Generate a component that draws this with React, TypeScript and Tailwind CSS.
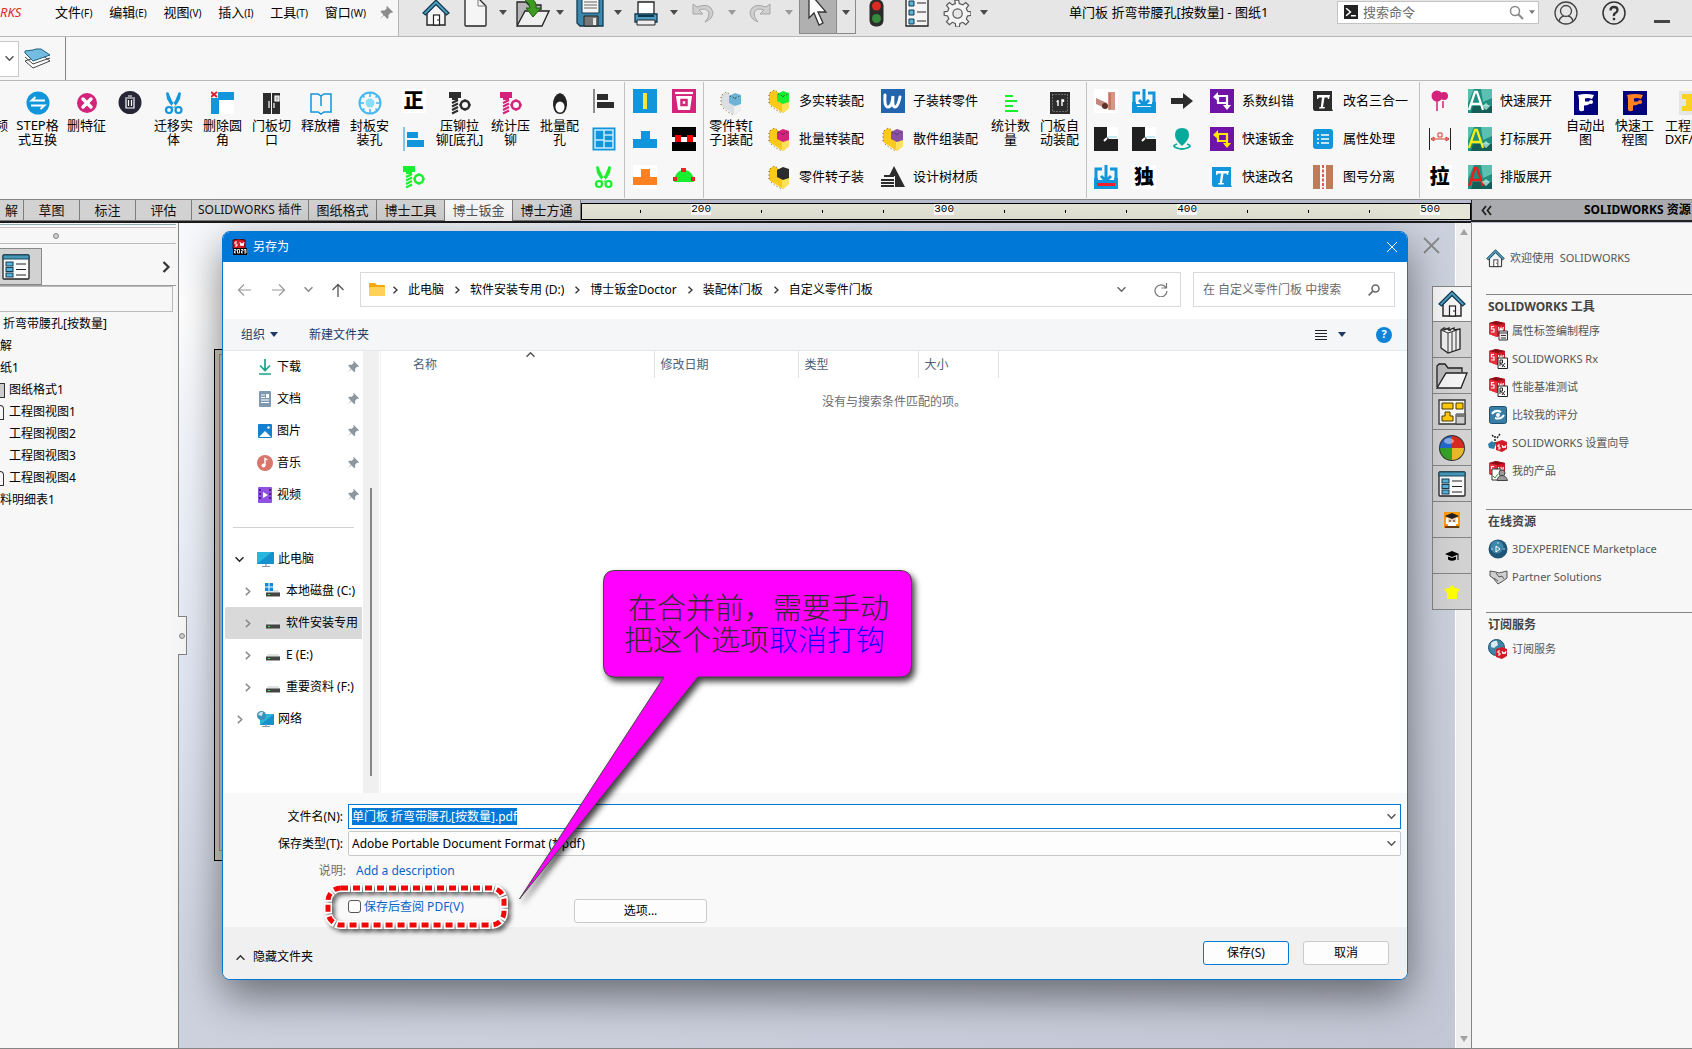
import React, { useEffect, useRef } from 'react';
import type { ReactNode } from 'react';

function Svg({ w = 24, h = w, vb = '0 0 24 24', children }: { w?: number; h?: number; vb?: string; children: ReactNode }) {
  return (
    <svg width={w} height={h} viewBox={vb} fill="none" className="shrink-0" aria-hidden="true">
      {children}
    </svg>
  );
}

/* ---------- shared icons ---------- */
const Caret = ({ color = '#4a4a4a' }: { color?: string }) => (
  <Svg w={8} h={5} vb="0 0 8 5"><path d="M0 0h8L4 5z" fill={color} /></Svg>
);
const Chevron = ({ d = 'right', color = '#555', size = 8 }: { d?: 'right' | 'down' | 'up'; color?: string; size?: number }) => (
  <Svg w={size} h={size} vb="0 0 8 8">
    <path d={d === 'right' ? 'M2.5 .8 6 4 2.5 7.2' : d === 'down' ? 'M.5 2 4 5.6 7.5 2' : 'M.5 6 4 2.4 7.5 6'} stroke={color} strokeWidth="1.3" />
  </Svg>
);
const House = ({ s = 28 }: { s?: number }) => (
  <Svg w={s} vb="0 0 28 28">
    <path d="M5 14v12h18V13L14 5z" fill="#f4f4f4" stroke="#222" strokeWidth="1.4" />
    <rect x="11.500" y="16" width="6" height="10" fill="#fff" stroke="#222" strokeWidth="1.2" />
    <path d="M16 20v2" stroke="#222" />
    <path d="m1 14 13-13 13 13-2.500 2L14 5.500 3.500 16z" fill="#4d9dc0" stroke="#12394f" strokeWidth="1.2" />
  </Svg>
);
const ListIcon = ({ s = 28 }: { s?: number }) => (
  <Svg w={s} vb="0 0 28 28">
    <rect x="1" y="2" width="26" height="24" rx="1" fill="#fafafa" stroke="#222" strokeWidth="1.3" />
    <path d="M1 2h26v4H1z" fill="#4796b5" stroke="#174a60" />
    {[9, 14.5, 20].map((y) => (
      <g key={y}>
        <rect x="4" y={y} width="7" height="4" fill="#58b1d6" stroke="#143d52" />
        <path d={`M14 ${y + 2}h10`} stroke="#222" />
      </g>
    ))}
  </Svg>
);
const Bolt = ({ c }: { c: string }) => (
  <Svg>
    <path d="M1 1h12v6h-3v2H4V7H1z" fill={c} />
    <path d="m4 12 6-3M4 15.500l6-3M4 19l6-3M4 22.500l6-3" stroke={c} strokeWidth="2" />
    <path d="m17 8 4 2 2 4-2 4-4 2-4-2-2-4 2-4z" fill={c} />
    <circle cx="17" cy="14" r="3" fill="#f7f7f7" />
  </Svg>
);
const Scissors = ({ c }: { c: string }) => (
  <Svg>
    <path d="M4 2c1-1 3-1 3 1l3 7 4 5-2 2L8 13 5 8zM19 2c-1-1-3-1-3 1l-3 7-4 5 2 2 4-4 3-5z" fill={c} />
    <circle cx="7" cy="19" r="3" stroke={c} strokeWidth="2.200" />
    <circle cx="16.500" cy="19" r="3" stroke={c} strokeWidth="2.200" />
  </Svg>
);
const Brick = ({ c, body = '#fbc91c', side = '#fbe15c' }: { c: string; body?: string; side?: string }) => (
  <Svg>
    <path d="m2 4 5-3 5 3v7l4 2 6-2v8l-6 5L2 15z" fill={body} />
    <path d="m15 13 7-4v10l-7 5z" fill={side} />
    <path d="M3 4 7 1l4 2M2 6v9m2 2 5 4 6 3" stroke="#6b5a10" strokeDasharray="1 2.500" />
    <path d="m10 5 6-3 6 2v9l-6 2-6-3z" fill={c} />
    <path d="m11 5 5 2 5-2M16 7v2" stroke="#1e3f2a" strokeDasharray="1 2" />
  </Svg>
);
const TextTile = ({ bg, c = '#fff' }: { bg: string; c?: string }) => (
  <Svg>
    <path d="M2 2h19v18l1 2H4q-2 0-2-3z" fill={bg} />
    <path d="M6 6h13l-1 4h-1l-.500-1.500h-3L12 18h2l-.500 1.500H8L8.500 18h1.300L11 8.500H8L7 10H6z" fill={c} />
  </Svg>
);
const Glyph = ({ t }: { t: string }) => (
  <span className="flex h-6 w-6 items-center justify-center bg-white text-[20px] leading-6 font-black text-black">{t}</span>
);
const CadTile = ({ c }: { c: string }) => (
  <Svg>
    <path d="M0 0h24v24H0z" fill="#1f9080" />
    <path d="M13 0h11v9L15 13zM0 0h6L0 14z" fill="#5cc0b0" />
    <path d="M3 24h21v-7H5z" fill="#135f58" />
    <path d="M1 21 7 3h2l6 18M3 15h9" stroke={c} strokeWidth="2.300" />
    <path d="M14 17h8m-4-3v7m-2-5h4v3h-4z" stroke="#b7f2e4" />
  </Svg>
);
const Corner = () => (
  <Svg><path d="M0 0h24v24H0z" fill="#fff" /><path d="M0 0h13v10l2 2h9v12H0z" fill="#1f1f1f" /><path d="M14 10h9" stroke="#8fd3e8" /><path d="m10 14 3-3" stroke="#fff" strokeWidth="2" /></Svg>
);
const Download = ({ red = false }: { red?: boolean }) => (
  <Svg>
    <path d="M0 13h24v11H0z" fill="#1296db" />
    <path d="M8 4H2v14h20V4h-6" stroke="#1296db" strokeWidth="3" />
    <path d="M4 8h5v7H4zm11 0h5v7h-5z" fill="#f7f7f7" />
    <path d="M12 0v15m-5-4 5 5 5-5" stroke="#1296db" strokeWidth="3" />
    <path d={red ? 'M3 18h18v3H3z' : 'M5 17h14v1H5z'} fill={red ? '#f0202d' : '#e9f7ff'} />
  </Svg>
);
const PurpleTile = ({ c }: { c: string }) => (
  <Svg>
    <path d="M0 0h24v24H0z" fill="#7114a6" />
    <path d="M7 7h10v9M17 14H8V8" stroke={c} strokeWidth="2.200" />
    <path d="m3 8 5-5v9zm18 8-4 5-4-5z" fill={c} />
  </Svg>
);
const FTile = ({ c }: { c: string }) => (
  <Svg>
    <path d="M0 0h24v24H0z" fill="#02027c" />
    <path d="M4 4q8-2 16 0l-2 4q-4-1.500-7-.500v3h6q-1 4-7 4v5q-5 2-5-2V9Q5 6 4 4z" fill={c} />
    <circle cx="17" cy="11" r="2" fill={c} />
  </Svg>
);
const Cube = ({ tag }: { tag?: string }) => (
  <Svg w={20} vb="0 0 20 20">
    <path d="m1 2 7-2 9 2v11l-8 3-8-3z" fill="#cf1724" />
    <path d="m1 2 8 2v12l-8-3z" fill="#e62f3b" />
    <path d="m1 2 7-2 9 2-8 2z" fill="#8c0f18" />
    <path d="M6 5.500H3.500V8H6v3H3M10.500 6l1 5 1.500-4 1 4 1.500-5" stroke="#fff" strokeWidth="1.200" />
    {tag === 'rx' && (<g><path d="M10 9h9.500v10.500H10z" fill="#fff" stroke="#222" /><path d="M12 17v-6h2.500v3H12l5 4m0-4-3 4" stroke="#222" /></g>)}
    {tag === 'doc' && (<g><path d="M11 10h8.500v9H11z" fill="#eee" stroke="#333" /><path d="M11 12h8M13 14.500h5M13 17h5" stroke="#333" /></g>)}
    {tag === 'user' && (<g><path d="M4 8h9v11H4z" fill="#fff" stroke="#333" /><circle cx="14" cy="12" r="3" fill="#999" stroke="#444" /><path d="M9 19.500q1-5 5-5t5.500 5z" fill="#999" stroke="#444" /><path d="m5 15 2 2 3-4" stroke="#2a9d2a" /></g>)}
  </Svg>
);

/* ---------- title bar ---------- */
const menus = [['文件', 'F'], ['编辑', 'E'], ['视图', 'V'], ['插入', 'I'], ['工具', 'T'], ['窗口', 'W']];

function TitleBar() {
  const btn = 'flex shrink-0 items-center justify-center h-9';
  return (
    <header className="flex h-[37px] shrink-0 border-b border-[#b9b9b9] bg-[#e6e6e6]">
      <div className="flex w-[399px] shrink-0 items-center border-r border-[#b5b5b5] bg-[#f7f7f7] pb-[10px]">
        <span className="flex w-[55px] shrink-0 text-[13px] text-[#dc2b26] italic">RKS</span>
        <nav className="flex shrink-0 grow justify-between">
          {menus.map(([t, k]) => (
            <button key={k} className="flex items-baseline text-[13px] whitespace-nowrap text-black">{t}<span className="text-[10px]">({k})</span></button>
          ))}
        </nav>
        <button aria-label="固定" className="flex w-8 justify-end pr-[5px] pl-4">
          <Svg w={14} vb="0 0 14 14"><path d="m8 0 6 6-1 1-1-.500-2.500 2.500v3l-1 1L5 9.500 1 13 4.500 9 1.500 5.500l1-1h3L8 2 7.200 1z" fill="#8c8c8c" /></Svg>
        </button>
      </div>
      <div className="flex min-w-0 grow items-start pl-[15px]">
        <button aria-label="主页" className={`${btn} w-[44px] pb-[11px]`}><House /></button>
        <button aria-label="新建" className={`${btn} w-[34px] pb-[11px]`}>
          <Svg w={23} h={28} vb="0 0 23 28"><path d="M1 0v26q0 1 1 1h19q1 0 1-1V7l-7-7z" fill="#f5f5f5" stroke="#222" strokeWidth="1.300" /><path d="M14 0v7h8" stroke="#777" /></Svg>
        </button>
        <button aria-label="新建选项" className={`${btn} w-[22px] pb-3`}><Caret /></button>
        <button aria-label="打开" className={`${btn} w-[38px] pb-[11px]`}>
          <Svg w={34} h={28} vb="0 0 34 28"><path d="M1 26V3h9l3 3h12v5" fill="#b5b5b5" stroke="#222" strokeWidth="1.300" /><path d="m1 27 8-15h24l-7 15z" fill="#efefef" stroke="#222" strokeWidth="1.300" /><path d="M8 0h8q5 3 4 9h5l-8 9-7-9h4q0-5-6-9z" fill="#3f9a20" stroke="#1e5b10" /></Svg>
        </button>
        <button aria-label="打开选项" className={`${btn} w-[15px] pb-3`}><Caret /></button>
        <button aria-label="保存" className={`${btn} w-[45px] pb-[11px]`}>
          <Svg w={28} vb="0 0 28 28"><path d="M1 0h26v27H4l-3-3z" fill="#3c87ad" stroke="#123b50" strokeWidth="1.300" /><path d="M6 0h17v14H6z" fill="#f4f4f4" stroke="#123b50" /><path d="M8 3h13M8 6h13M8 9h13" stroke="#666" /><path d="M8 17h14v10H8z" fill="#777" stroke="#222" /><path d="M17 19h3v7h-3z" fill="#e6e6e6" /></Svg>
        </button>
        <button aria-label="保存选项" className={`${btn} w-[12px] pb-3`}><Caret /></button>
        <button aria-label="打印" className={`${btn} w-[43px] pb-[11px]`}>
          <Svg w={24} h={26} vb="0 0 24 26"><path d="M4 2h16v13H4z" fill="#fff" stroke="#222" strokeWidth="1.300" /><path d="M1 14h22v8H1z" fill="#4e9dc1" stroke="#0e3850" strokeWidth="1.300" /><path d="M3 20h18v5H3z" fill="#eee" stroke="#222" /><path d="M4 16h16" stroke="#0e3850" strokeWidth="2" /></Svg>
        </button>
        <button aria-label="打印选项" className={`${btn} w-[14px] pb-3`}><Caret /></button>
        <button aria-label="撤销" className={`${btn} w-[44px] pb-[10px]`}>
          <Svg w={22} vb="0 0 22 22"><path d="M1 2v10h10L7 8q8-3 10 3 0 5-4 9 8-3 8-10Q18 0 5 5z" fill="#cfcfcf" stroke="#a6a6a6" /></Svg>
        </button>
        <button aria-label="撤销选项" className={`${btn} w-[13px] pb-3`}><Caret color="#9a9a9a" /></button>
        <button aria-label="重做" className={`${btn} w-[44px] pb-[10px]`}>
          <Svg w={22} vb="0 0 22 22"><path d="M21 2v10H11l4-4q-8-3-10 3 0 5 4 9-8-3-8-10Q4 0 17 5z" fill="#cfcfcf" stroke="#a6a6a6" /></Svg>
        </button>
        <button aria-label="重做选项" className={`${btn} w-[13px] pb-3`}><Caret color="#9a9a9a" /></button>
        <div className="ml-[4px] flex h-[34px] border border-t-0 border-[#8a8a8a]">
          <button aria-label="选择" className="flex w-[36px] items-center justify-center bg-[#b0b0b0] pb-[9px]">
            <Svg w={20} h={28} vb="0 0 20 28"><path d="M1 0v20l5-5 5 12 4-2-5-11h8L6 0z" fill="#fff" stroke="#333" strokeWidth="1.300" /></Svg>
          </button>
          <button aria-label="选择选项" className="flex w-[19px] items-center justify-center border-l border-[#8a8a8a] pb-[9px]"><Caret /></button>
        </div>
        <button aria-label="重建" className={`${btn} w-[40px] pb-[11px]`}>
          <Svg w={15} h={28} vb="0 0 15 28"><rect width="14" height="27" x=".500" y=".500" rx="6" fill="#2b2b2b" /><circle cx="7.500" cy="7" r="4.500" fill="#d92b22" /><circle cx="7.500" cy="19.500" r="4.500" fill="#358a3c" /></Svg>
        </button>
        <button aria-label="文件属性" className={`${btn} w-[42px] pb-[11px]`}>
          <Svg w={24} h={28} vb="0 0 24 28"><path d="M1 0h22v27H1z" fill="#f4f4f4" stroke="#222" strokeWidth="1.300" />{[2, 11, 20].map((y) => <g key={y}><path d={`M4 ${y}h5v5H4z`} fill="#5cb3d6" stroke="#123b50" /><path d={`M12 ${y + 2}h9`} stroke="#222" /></g>)}</Svg>
        </button>
        <button aria-label="选项" className={`${btn} w-[37px] pb-[10px]`}>
          <Svg w={28} vb="0 0 24 24"><path d="m10 1 .600 3-2.600 1-2.500-2L3 5.500l2 2.500-1 2.500L1 11v3l3 .500 1 2.500-2 2.500L5.500 22 8 20l2.500 1 .500 3h3l.500-3L17 20l2.500 2 2.500-2.500-2-2.500 1-2.500 3-.500v-3l-3-.500L20 8l2-2.500L19.500 3 17 5l-3-1-.600-3z" fill="#f4f4f4" stroke="#555" /><circle cx="12.500" cy="12.500" r="4" fill="#e6e6e6" stroke="#555" /></Svg>
        </button>
        <button aria-label="更多选项" className={`${btn} w-[18px] pb-3`}><Caret /></button>
        <h1 className="ml-[76px] pt-[2px] text-[13px] leading-5 whitespace-nowrap text-black">单门板 折弯带腰孔[按数量] - 图纸1</h1>
        <div className="mt-[1px] mr-[15px] ml-auto flex h-[23px] w-[202px] shrink-0 items-center border border-[#c3c3c3] bg-white pr-[3px] pb-px pl-[6px]">
          <Svg w={14} vb="0 0 13 13"><path d="M0 0h13v13H0z" fill="#222" /><path d="m2 3 4 3.500L2 10M6.500 10H11" stroke="#fff" strokeWidth="1.400" /></Svg>
          <input aria-label="搜索命令" placeholder="搜索命令" className="ml-[5px] w-[116px] grow bg-transparent text-[13px] leading-5 outline-none placeholder:text-[#6e6e6e]" />
          <Svg w={15} vb="0 0 15 15"><circle cx="6" cy="6" r="4.500" stroke="#888" strokeWidth="1.500" /><path d="m9 9 5 5" stroke="#888" strokeWidth="2" /></Svg>
          <span className="ml-[5px]"><Svg w={6} h={4} vb="0 0 8 5"><path d="M0 0h8L4 5z" fill="#777" /></Svg></span>
        </div>
        <button aria-label="登录" className="pt-[1px] pr-6"><Svg w={24}><circle cx="12" cy="12" r="11" stroke="#444" strokeWidth="1.300" /><circle cx="12" cy="10" r="5.500" stroke="#444" strokeWidth="1.300" /><path d="M5 20q1-4 5-5m9 5q-1-4-5-5" stroke="#444" strokeWidth="1.300" /></Svg></button>
        <button aria-label="帮助" className="pt-[1px] pr-7"><Svg w={24}><circle cx="12" cy="12" r="11" stroke="#333" strokeWidth="1.500" /><path d="M8.500 9.500q0-3.500 3.500-3.500t3.500 3q0 2-2 3T12 15" stroke="#333" strokeWidth="2.300" /><path d="M10.800 16.800h2.400v2.400h-2.400z" fill="#333" /></Svg></button>
        <button aria-label="最小化" className="pt-5 pr-[22px]"><span className="block h-[3px] w-4 bg-[#444]" /></button>
      </div>
    </header>
  );
}

/* ---------- ribbon ---------- */
function Tall({ icon, lines, className = 'w-[49px]' }: { icon: ReactNode; lines: string[]; className?: string }) {
  return (
    <button className={`flex shrink-0 flex-col items-center pt-[10px] ${className}`} aria-label={lines.join('') || '删除'}>
      {icon}
      <span className="pt-[3px] text-[13px] leading-[14px] whitespace-pre-line">{lines.join('\n')}</span>
    </button>
  );
}
function IconCol({ icons, className = 'w-[38px]' }: { icons: [string, ReactNode][]; className?: string }) {
  return (
    <div className={`flex shrink-0 flex-col ${className}`}>
      {icons.map(([n, i]) => <button key={n} aria-label={n} className="flex h-[38px] items-center justify-center pt-[2px]">{i}</button>)}
    </div>
  );
}
function RowCol({ rows, className }: { rows: [ReactNode, string][]; className: string }) {
  return (
    <div className={`flex shrink-0 flex-col ${className}`}>
      {rows.map(([i, t]) => (
        <button key={t} className="flex h-[38px] items-center pt-[2px] text-[13px] whitespace-nowrap">
          <span className="flex w-[41px] shrink-0 justify-center">{i}</span>{t}
        </button>
      ))}
    </div>
  );
}
const Divider = ({ className = '' }: { className?: string }) => <div className={`my-[1px] w-px shrink-0 bg-[#c2c2c2] ${className}`} />;

function Ribbon() {
  return (
    <section className="flex h-[118px] shrink-0 overflow-hidden bg-[#f7f7f7] text-black">
      <div className="flex w-[13px] shrink-0 justify-end overflow-hidden pt-[37px] pr-[5px] text-[13px] leading-[14px]">频</div>
      <Tall lines={['STEP格', '式互换']} icon={<Svg><circle cx="12" cy="12" r="11.500" fill="#1296db" /><path d="M19 9.500H5.500L9.500 6M5 14.500h13.500l-4 3.500" stroke="#fff" strokeWidth="1.800" /></Svg>} />
      <Tall lines={['删特征']} icon={<Svg><circle cx="12" cy="12" r="10" fill="#d4237a" /><path d="m8 8 8 8m0-8-8 8" stroke="#fff" strokeWidth="3.500" strokeLinecap="round" /></Svg>} />
      <Tall className="w-[38px]" lines={[]} icon={<Svg><circle cx="12" cy="11.500" r="11.500" fill="#272636" /><path d="M7 7h10M10 5h4M8 8v9h8V8M10.500 9v6m3-6v6" stroke="#fff" strokeWidth="1.200" /></Svg>} />
      <Tall lines={['迁移实', '体']} icon={<Scissors c="#1296db" />} />
      <Tall lines={['删除圆', '角']} icon={<Svg><path d="M0 1h23v22H0z" fill="#fff" /><path d="M0 1h23v8H8v14H0z" fill="#1296db" /><path d="M0 0h7v7H0z" fill="#f7f7f7" /><path d="m0 1 6 5m0-5L0 6" stroke="#e0182d" strokeWidth="1.800" /></Svg>} />
      <Tall lines={['门板切', '口']} icon={<Svg><path d="M3 2h8v21H3zm9 0h8v21h-8z" fill="#2c2c2c" /><path d="M15 5h4v5h-4zM9 10v7M14 12v5" stroke="#fff" strokeWidth="1.200" fill="#bbb" /></Svg>} />
      <Tall lines={['释放槽']} icon={<Svg><path d="M2 3h7l3 2 3-2h7v18h-7l-3 2-3-2H2zM12 5v10" stroke="#1296db" strokeWidth="1.500" /></Svg>} />
      <Tall lines={['封板安', '装孔']} icon={<Svg><circle cx="12" cy="12" r="10.500" stroke="#46b8f3" strokeWidth="2" /><circle cx="12" cy="12" r="4.500" fill="#8adcfb" /><path d="M12 1v5m0 12v5M1 12h5m12 0h5M4.500 4.500l2 2m11 11 2 2m0-15-2 2m-11 11-2 2" stroke="#46b8f3" strokeWidth="1.600" /></Svg>} />
      <IconCol className="w-[39px]" icons={[
        ['正', <Glyph t="正" />],
        ['左对齐', <Svg><path d="M2 0v24" stroke="#1296db" /><path d="M5 5h11v6H5zm0 8h17v7H5z" fill="#1296db" /></Svg>],
        ['螺栓', <Bolt c="#18f02f" />],
      ]} />
      <Tall className="w-[53px]" lines={['压铆拉', '铆[底孔]']} icon={<Bolt c="#2c2c2c" />} />
      <Tall lines={['统计压', '铆']} icon={<Bolt c="#d4237a" />} />
      <Tall lines={['批量配', '孔']} icon={<Svg><path d="M12 2q7 2 7 12-1 9-7 9t-7-9Q5 4 12 2z" fill="#222" /><ellipse cx="12" cy="16" rx="4.500" ry="5.500" fill="#fff" /></Svg>} />
      <IconCol className="w-10" icons={[
        ['对齐', <Svg><path d="M2 0v24" stroke="#222" /><path d="M5 5h11v6H5zm0 8h17v6H5z" fill="#2c2c2c" /></Svg>],
        ['布局', <Svg><path d="M.500.500h23v23H.500z" fill="#1296db" /><path d="M3 3h18v18H3zM3 13h9M12 3v18M12 8h9M12 14h9" stroke="#c9eaff" strokeWidth="1.500" /></Svg>],
        ['剪切', <Scissors c="#18f02f" />],
      ]} />
      <Divider />
      <IconCol className="w-[39px]" icons={[
        ['单列', <Svg><path d="M0 0h24v24H0z" fill="#1296db" /><path d="M10 4h4v16h-4z" fill="#f7e53a" /></Svg>],
        ['蓝色凸台', <Svg><path d="M8 4h9v8h7v9H0v-9h8z" fill="#1296db" /></Svg>],
        ['橙色凸台', <Svg><path d="M0 0h24v24H0z" fill="#fff" /><path d="M8 4h9v8h7v8H0v-8h8z" fill="#ff8121" /></Svg>],
      ]} />
      <IconCol className="w-[39px]" icons={[
        ['槽口', <Svg><path d="M0 0h24v24H0z" fill="#d4237a" /><path d="M3 4h18" stroke="#fff" strokeWidth="2.200" /><path d="M4 7h16l-2 14H6z" fill="#fff" /><path d="M9.500 11h5v5h-5z" stroke="#d4237a" strokeWidth="2.500" /></Svg>],
        ['面罩', <Svg><path d="M0 0h24v24H0z" fill="#000" /><path d="M0 10h24v5H0z" fill="#fff" /><path d="M3 8h6v7H3zm12 0h6v7h-6z" fill="#f00" /></Svg>],
        ['圆顶', <Svg><path d="M2 17q1-12 10-12t10 12z" fill="#18f02f" /><path d="M9 3h5v4H9zM1 12h4v4H1zm18 0h4v4h-4z" fill="#ec2323" /></Svg>],
      ]} />
      <Divider />
      <Tall className="w-[54px]" lines={['零件转[', '子]装配']} icon={<Brick c="#6cb3d6" body="#dcdfe2" side="#f0f0f0" />} />
      <RowCol className="w-[114px]" rows={[[<Brick c="#18f02f" />, '多实转装配'], [<Brick c="#d4237a" />, '批量转装配'], [<Brick c="#2c2c2c" />, '零件转子装']]} />
      <RowCol className="w-[114px]" rows={[
        [<Svg><path d="M0 0h24v24H0z" fill="#2264ad" /><path d="M4 6q-1 12 3 12t5-11q-1 11 2 11t5-10" stroke="#fff" strokeWidth="3" strokeLinecap="round" /></Svg>, '子装转零件'],
        [<Brick c="#8a4fa3" />, '散件组装配'],
        [<Svg><path d="m13 1 11 21H14V11H8z" fill="#2c2c2c" /><path d="M3 11h10M0 15h13M0 18h13M0 21h13" stroke="#2c2c2c" strokeWidth="2" /></Svg>, '设计树材质'],
      ]} />
      <Tall lines={['统计数', '量']} icon={<Svg><path d="M6 5h8M6 10h12M6 15h8M6 20h13" stroke="#18f02f" strokeWidth="2" /></Svg>} />
      <Tall lines={['门板自', '动装配']} icon={<Svg><path d="M2 1h20v22H2z" fill="#2c2c2c" /><path d="M4.500 3.500h15v17h-15z" stroke="#aaa" strokeDasharray="1 2" /><path d="M10 9v6M8.500 10.500H10M14 15V9h1.500v2" stroke="#fff" strokeWidth="1.400" /></Svg>} />
      <Divider className="ml-[2px]" />
      <IconCol icons={[
        ['铜管', <Svg><path d="M0 0h24v24H0z" fill="#fff" /><path d="M14 3h7v18h-7z" fill="#d99684" /><path d="M16 4v16" stroke="#a85f50" /><path d="m2 9 11 5v6L2 15z" fill="#c0897c" /><circle cx="11" cy="17" r="3" fill="#5c3129" /></Svg>],
        ['切角一', <Corner />],
        ['导入', <Download red />],
      ]} />
      <IconCol icons={[['导出', <Download />], ['切角二', <Corner />], ['独', <Glyph t="独" />]]} />
      <IconCol icons={[
        ['箭头', <Svg><path d="M1 9h12V4l10 8-10 8v-5H1z" fill="#2c2c2c" /></Svg>],
        ['定位', <Svg><path d="M12 1q7 0 7 7 0 5-7 11Q5 13 5 8q0-7 7-7z" fill="#06a99a" /><path d="M7 17q-6 2 0 4 5 2 10 0 6-2 0-4" stroke="#06a99a" strokeWidth="1.800" /></Svg>],
      ]} />
      <RowCol className="w-[101px]" rows={[[<PurpleTile c="#fff" />, '系数纠错'], [<PurpleTile c="#ffe800" />, '快速钣金'], [<TextTile bg="#1296db" />, '快速改名']]} />
      <RowCol className="w-[117px]" rows={[
        [<TextTile bg="#2c2c2c" />, '改名三合一'],
        [<Svg><rect x="2" y="2" width="20" height="20" rx="3" fill="#1296db" /><path d="M6 8h2m2 0h8M6 12h2m2 0h8M6 16h2m2 0h8" stroke="#fff" strokeWidth="1.500" /></Svg>, '属性处理'],
        [<Svg><path d="M2 0h7v24H2zm13 0h7v24h-7z" fill="#bd7d58" /><path d="M12 0v24" stroke="#e02020" strokeWidth="1.500" strokeDasharray="3 1.500" /></Svg>, '图号分离'],
      ]} />
      <Divider />
      <IconCol className="w-[39px]" icons={[
        ['气球', <Svg><circle cx="9" cy="7" r="5.500" fill="#d4237a" /><circle cx="16" cy="7" r="4" fill="#d4237a" /><path d="M9 12v10M15 12v7" stroke="#d4237a" strokeWidth="1.500" /></Svg>],
        ['尺寸', <Svg><path d="M1.500 1v22M22.500 1v22" stroke="#222" /><path d="M3 12h18M3 12l3-2v4zm18 0-3-2v4zM10 6h4v4h-4z" stroke="#d63a2a" /></Svg>],
        ['拉', <Glyph t="拉" />],
      ]} />
      <RowCol className="w-[102px]" rows={[[<CadTile c="#fff" />, '快速展开'], [<CadTile c="#f7ef12" />, '打标展开'], [<CadTile c="#f01b1b" />, '排版展开']]} />
      <Tall lines={['自动出', '图']} icon={<FTile c="#fff" />} />
      <Tall lines={['快速工', '程图']} icon={<FTile c="#ff8121" />} />
      <Tall className="w-[64px]" lines={['工程图转', 'DXF/PDF']} icon={<Svg><path d="M0 0h24v24H0z" fill="#e5e5e5" /><path d="M3 3h18v5h-6v7h6v5H3v-5h4V8H3z" fill="#fbd21e" /></Svg>} />
    </section>
  );
}

/* ---------- tab strip and ruler ---------- */
const tabs: [string, string][] = [['解', 'w-6'], ['草图', 'w-14'], ['标注', 'w-14'], ['评估', 'w-14'], ['SOLIDWORKS 插件', 'w-[117px]'], ['图纸格式', 'w-[68px]'], ['博士工具', 'w-[68px]'], ['博士钣金', 'w-[68px]'], ['博士方通', 'w-[68px]']];

function TabStrip() {
  return (
    <div className="flex h-[24px] shrink-0 border-t border-[#858585] bg-[#b9bbce]">
      <div className="flex min-w-0 grow border-b-2 border-[#1a1a1a]">
        <div role="tablist" className="flex h-[21px] shrink-0">
          {tabs.map(([t, w], i) => (
            <button key={t} role="tab" aria-selected={i === 7} className={`flex items-center justify-center border-r border-[#7d7d7d] pb-px leading-[18px] whitespace-nowrap ${w} ${i === 4 ? 'text-[12px]' : 'text-[13px]'} ${i === 7 ? 'bg-[#f7f7f7] text-[#555]' : 'border-b bg-[#d2d2d2] text-[#111]'}`}>{t}</button>
          ))}
        </div>
        <div className="mt-[3px] flex h-[17px] grow overflow-hidden border border-black bg-[#e5e5d8] pl-[28px] font-['Liberation_Mono'] text-[11px] leading-[11px] text-black">
          {[200, 300, 400, 500].map((n) => (
            <div key={n} className="grid w-[243px] shrink-0 grid-cols-4 items-center justify-items-center">
              <span className="h-[3px] w-px bg-black" />
              <span className="mb-1 bg-white">{n}</span>
              <span className="h-[3px] w-px bg-black" />
              <span className="h-[3px] w-px bg-black" />
            </div>
          ))}
        </div>
      </div>
      <div className="flex h-[22px] w-[221px] shrink-0 items-center overflow-hidden border-b-2 border-l border-[#222] bg-[#a9abae] pl-[9px] text-black">
        <button aria-label="折叠" className="mr-[92px]"><Svg w={11} h={11} vb="0 0 11 11"><path d="M5 1 1.500 5.500 5 10M10 1 6.500 5.500 10 10" stroke="#222" strokeWidth="1.800" /></Svg></button>
        <h2 className="shrink-0 text-[12px] font-bold whitespace-nowrap">SOLIDWORKS 资源</h2>
      </div>
    </div>
  );
}

/* ---------- feature tree ---------- */
const tree: [string, string][] = [['折弯带腰孔[按数量]', 'root'], ['解', ''], ['纸1', ''], ['图纸格式1', 'sheet'], ['工程图视图1', 'view'], ['工程图视图2', 'none'], ['工程图视图3', 'none'], ['工程图视图4', 'view'], ['料明细表1', '']];

function FeaturePanel() {
  return (
    <aside className="flex w-[179px] shrink-0 flex-col border-r border-[#858585] bg-[#f7f7f7] pr-[2px]">
      <div className="h-[2px] border-b border-[#8fabb2]" />
      <div className="h-[3px] border-b border-[#c5c5c5]" />
      <div className="flex h-4 items-center border-b border-[#bcbcbc] pl-[53px]"><span className="size-[6px] rounded-full border border-[#888] bg-[#ccc]" /></div>
      <div className="flex h-[42px] items-end justify-between border-b border-[#9a9a9a]">
        <button aria-label="FeatureManager" className="flex h-[37px] w-[42px] items-center border border-l-0 border-[#8a8a8a] bg-[#d2d2d2] pl-[2px]"><ListIcon /></button>
        <button aria-label="展开" className="flex h-[37px] w-[14px] items-center"><Svg w={9} h={12} vb="0 0 9 12"><path d="m1.500 1 5 5-5 5" stroke="#333" strokeWidth="2.200" /></Svg></button>
      </div>
      <input aria-label="过滤" className="mr-[3px] mb-[1px] h-[26px] shrink-0 border border-l-0 border-[#bcbcbc] bg-[#f7f7f7] outline-none" />
      <ul className="text-[12px] leading-[22px] whitespace-nowrap text-black">
        {tree.map(([t, k]) => (
          <li key={t} className={`flex h-[22px] items-center ${k === 'root' ? 'pl-[3px]' : ''}`}>
            {k === 'sheet' && <span className="mr-1 h-[15px] w-[5px] border border-l-0 border-[#333] bg-[#ccc]" />}
            {k === 'view' && <span className="mr-[5px] h-[15px] w-1 rounded-tr-[4px] border border-l-0 border-[#333]" />}
            {k === 'none' && <span className="w-[9px]" />}
            {t}
          </li>
        ))}
      </ul>
    </aside>
  );
}

/* ---------- task pane ---------- */
const taskTabs: [string, ReactNode][] = [
  ['资源', <House />],
  ['设计库', <Svg w={28} vb="0 0 28 28"><path d="m3 4 3-2v2l5-2v2l5-2v2l6-1v20l-12 4-7-5z" fill="#eee" stroke="#222" strokeWidth="1.300" /><path d="m3 4 7 3v20M10 7l12-4M14 6v19M18 5v19M7 2l6 3" stroke="#333" /></Svg>],
  ['文件探索器', <Svg w={32} h={26} vb="0 0 32 26"><path d="M1 24V3l2-2h6l3 4h14v4" fill="#bbb" stroke="#222" strokeWidth="1.300" /><path d="m1 25 9-15h21l-6 15z" fill="#f4f4f4" stroke="#222" strokeWidth="1.300" /></Svg>],
  ['视图调色板', <Svg w={28} vb="0 0 28 28"><path d="M1 2h26v24H1z" fill="#f7f7f7" stroke="#333" strokeWidth="1.300" /><path d="M4 5h11v6H4zm14 0h7v6h-7zM7 14h5v4h3v5H4v-5h3z" fill="#ffc90e" stroke="#4a3b00" /><path d="M18 16h9v10h-9z" fill="#ccc" stroke="#333" /><path d="M18 16h9v3h-9z" fill="#777" /></Svg>],
  ['外观', <Svg w={28} vb="0 0 28 28"><circle cx="14" cy="14" r="13" fill="#333" /><path d="M14 14V2A12 12 0 0 1 26 14z" fill="#d62a1e" /><path d="M14 14H26A12 12 0 0 1 14 26z" fill="#e8b82a" /><path d="M14 14v12A12 12 0 0 1 2 14z" fill="#36a127" /><path d="M14 14H2A12 12 0 0 1 14 2z" fill="#2468cc" /><ellipse cx="11" cy="7" rx="5" ry="3" fill="#fff" opacity=".450" /></Svg>],
  ['自定义属性', <ListIcon />],
  ['博士', <Svg w={16} vb="0 0 16 16"><path d="M0 0h16v16H0z" fill="#ff9a0c" /><path d="M3 5h10v7H3z" fill="#f2cfb0" /><path d="m1 4 7-3 7 3-7 3z" fill="#222" /><path d="M4 11q4-3 8 0v3H4zM2 6h2v6H2zm10 0h2v6h-2z" fill="#fff" /><path d="M1 14h14v2H1z" fill="#663a14" /><path d="M5 9h2m2 0h2" stroke="#333" /></Svg>],
  ['学士帽', <Svg w={16} vb="0 0 16 16"><path d="m1 6 7-3 7 3-7 3z" fill="#000" /><path d="M4 8.500v3q4 2.500 8 0v-3L8 10z" fill="#000" /><path d="M14 6v6" stroke="#000" /></Svg>],
  ['星标', <Svg w={16} vb="0 0 16 16"><path d="m8 1 3 3 5 1-3 4v6H3V9L0 5l5-1z" fill="#ff0" /></Svg>],
];

const Heading = ({ children }: { children: ReactNode }) => (
  <h3 className="border-t border-[#858585] pt-[3px] pl-[2px] text-[12px] leading-[18px] font-bold text-[#444]">{children}</h3>
);
function Item({ icon, children }: { icon: ReactNode; children: ReactNode }) {
  return (
    <li className="flex h-7 items-center pl-[2px]">
      <span className="mr-1 flex w-5 shrink-0 justify-center">{icon}</span>
      <a href="#resource" className="text-[11px] leading-4 text-[#555]">{children}</a>
    </li>
  );
}

function TaskPane() {
  return (
    <aside className="w-[221px] shrink-0 overflow-hidden border-l border-[#858585] bg-[#f7f7f7] pl-[14px] whitespace-nowrap">
      <a href="#welcome" className="flex h-[71px] items-center text-[11px] text-[#555]"><House s={19} /><span className="pl-[5px]">欢迎使用&nbsp; SOLIDWORKS</span></a>
      <section className="h-[215px]">
        <Heading>SOLIDWORKS 工具</Heading>
        <ul className="pt-px">
          <Item icon={<Cube tag="doc" />}>属性标签编制程序</Item>
          <Item icon={<Cube tag="rx" />}>SOLIDWORKS Rx</Item>
          <Item icon={<Cube tag="rx" />}>性能基准测试</Item>
          <Item icon={<Svg w={18} vb="0 0 18 18"><rect x=".500" y=".500" width="17" height="17" rx="2" fill="#377da6" stroke="#1d4f6d" /><path d="M3 8q3-5 9-2M15 9q-3 5-9 3" stroke="#fff" strokeWidth="2" /><circle cx="9" cy="9" r="2" fill="#fff" /></Svg>}>比较我的评分</Item>
          <Item icon={<Svg w={20} vb="0 0 20 20"><path d="M7 3v8m-3-9 2 2m6-3-3 4" stroke="#222" strokeWidth="1.500" strokeDasharray="2 1" /><path d="m0 11 4-3 4 3-2 5-5-1z" fill="#2b7ea8" /><path d="m8 9 6-2 5 2v7l-5 3-6-2z" fill="#d01c29" /><path d="M12 12H10v2h2v2h-2m4-4 1 3 1-2 1 2 1-3" stroke="#fff" /></Svg>}>SOLIDWORKS 设置向导</Item>
          <Item icon={<Cube tag="user" />}>我的产品</Item>
        </ul>
      </section>
      <section className="h-[103px]">
        <Heading>在线资源</Heading>
        <ul className="pt-1">
          <Item icon={<Svg w={20} vb="0 0 20 20"><circle cx="10" cy="10" r="9.500" fill="#1f5678" /><circle cx="9" cy="8" r="6.500" fill="#3f86ad" /><path d="M8 7v6l4-3z" stroke="#fff" /><path d="M10 3v2M3 10h2M15 10h2" stroke="#b8dcee" /></Svg>}>3DEXPERIENCE Marketplace</Item>
          <Item icon={<Svg w={19} vb="0 0 19 19"><path d="m1 3 6 1 3 1 8-2v7l-4 3-5 3-5-6-3-2z" fill="#d0d0d0" stroke="#555" /><path d="m7 5 3 4 3-1 2 3M5 10l4 3" stroke="#555" /></Svg>}>Partner Solutions</Item>
        </ul>
      </section>
      <section>
        <Heading>订阅服务</Heading>
        <ul className="pt-px"><Item icon={<Svg w={20} vb="0 0 20 20"><circle cx="8.500" cy="8.500" r="8" fill="#3c84a8" stroke="#1f506b" /><path d="M3 4q3-3 6-2l1 4-4 3-3-1z" fill="#dceaf0" /><path d="m8 10 6-2 5 2v7l-5 3-6-2z" fill="#d01c29" /><path d="M12 12H10v2h2v2h-2m4-4 1 3 1-2 1 2 1-3" stroke="#fff" /></Svg>}>订阅服务</Item></ul>
      </section>
    </aside>
  );
}

/* ---------- save dialog ---------- */
const Pin = () => <Svg w={12} vb="0 0 14 14"><path d="m8 0 6 6-1 1-1-.500-2.500 2.500v3l-1 1L5 9.500 1 13 4.500 9 1.500 5.500l1-1h3L8 2 7.200 1z" fill="#8c979e" /></Svg>;
const Drive = ({ win = false }: { win?: boolean }) => (
  <Svg w={16} vb="0 0 16 16"><path d="M3 7h10l2 3H1z" fill="#dfe3e6" /><path d="M1 9.500h14v4H1z" fill="#454545" /><path d="M3 11.500h2" stroke="#3ce04c" />{win && <path d="M0 0h3.500v3.500H0zm4.500 0H8v3.500H4.500zM0 4.500h3.500V8H0zm4.500 0H8V8H4.500z" fill="#118ad8" />}</Svg>
);
const Monitor = ({ net = false }: { net?: boolean }) => (
  <Svg w={17} vb="0 0 17 17"><path d={net ? 'M3 3h14v11H3z' : 'M0 1h17v12H0z'} fill="#1591ce" /><path d={net ? 'M3 14 17 3H3z' : 'M0 13 15 1H0z'} fill="#35c5df" opacity=".700" /><path d="M5 15.500h8M9 13v2" stroke="#8e979f" strokeWidth="1.200" />{net && <g><circle cx="4.500" cy="4.500" r="4.500" fill="#3b91b9" /><path d="M1 4q2-4 5-3L5 5z" fill="#c6e4ee" /></g>}</Svg>
);
const quick: [string, ReactNode][] = [
  ['下载', <Svg w={14} h={16} vb="0 0 14 16"><path d="M7 0v11M2 6.500l5 5 5-5M1 15h12" stroke="#16a58a" strokeWidth="1.700" /></Svg>],
  ['文档', <Svg w={14} h={16} vb="0 0 14 16"><rect x="1" width="12" height="16" rx="1" fill="#8099b3" /><path d="M3 4h4M3 6.500h4M3 9h8M3 11.500h8" stroke="#fff" /><path d="M8 3h3v4H8z" fill="#fff" /></Svg>],
  ['图片', <Svg w={14} vb="0 0 14 14"><rect width="14" height="14" rx="1" fill="#1580cf" /><path d="m1 13 6-6 6 6z" fill="#fff" /><circle cx="10.500" cy="3.500" r="1.200" fill="#fff" /></Svg>],
  ['音乐', <Svg w={16} vb="0 0 16 16"><circle cx="8" cy="8" r="8" fill="#d9756b" /><circle cx="6.500" cy="10.500" r="2" fill="#fff" /><path d="M8 10.500V3.500l2.500 1.500" stroke="#fff" strokeWidth="1.400" /></Svg>],
  ['视频', <Svg w={14} h={16} vb="0 0 14 16"><rect width="14" height="16" rx="1" fill="#9050e0" /><path d="M2 2v12M12 2v12" stroke="#3d1a72" strokeWidth="1.600" strokeDasharray="2 2" /><path d="M5 5v6l5-3z" fill="#fff" /></Svg>],
];
const places: [string, ReactNode, boolean][] = [['本地磁盘 (C:)', <Drive win />, false], ['软件安装专用', <Drive />, true], ['E (E:)', <Drive />, false], ['重要资料 (F:)', <Drive />, false]];

function Sidebar() {
  return (
    <div className="flex w-[158px] shrink-0 border-r border-[#f0f0f0]">
      <ul className="w-[140px] shrink-0 pr-px pl-[2px] whitespace-nowrap text-black">
        {quick.map(([t, i]) => (
          <li key={t} className="flex h-8 items-center pr-[3px] pl-8">
            <span className="mr-1 flex w-4 justify-center">{i}</span>{t}<span className="ml-auto"><Pin /></span>
          </li>
        ))}
        <li className="mr-2 ml-2 h-[17px] border-b border-[#d2d2d2]" aria-hidden="true" />
        <li className="mt-[15px] flex h-8 items-center pl-[10px]"><Chevron d="down" color="#222" size={9} /><span className="mr-1 ml-[13px]"><Monitor /></span>此电脑</li>
        {places.map(([t, i, sel]) => (
          <li key={t} className={`flex h-8 items-center overflow-hidden rounded-l-[2px] pl-[18px] ${sel ? 'bg-[#d9d9d9]' : ''}`}>
            <Chevron color="#888" size={9} /><span className="mr-[5px] ml-[13px]">{i}</span>{t}
          </li>
        ))}
        <li className="flex h-8 items-center pl-[10px]"><Chevron color="#888" size={9} /><span className="mr-1 ml-[13px]"><Monitor net /></span>网络</li>
      </ul>
      <div className="w-4 shrink-0 bg-[#f0f0f0] pt-[137px] pb-[17px]"><div className="mx-auto h-full w-[2px] bg-[#868686]" /></div>
    </div>
  );
}

function SaveDialog() {
  const nameRef = useRef<HTMLInputElement>(null);
  useEffect(() => {
    nameRef.current?.focus({ preventScroll: true });
    nameRef.current?.select();
  }, []);
  const crumbs = ['此电脑', '软件安装专用 (D:)', '博士钣金Doctor', '装配体门板', '自定义零件门板'];
  return (
    <div role="dialog" aria-label="另存为" className="absolute top-[8px] right-[63px] bottom-[68px] left-[43px] flex flex-col overflow-hidden rounded-lg border border-[#0078d4] bg-white text-[12px] shadow-[0_16px_44px_rgba(0,0,0,0.5)]">
      <div className="flex h-[30px] shrink-0 items-center bg-[#0078d7] pr-[9px] pl-2 text-white">
        <Svg w={16} vb="0 0 16 16"><path d="m2 1 6-1 6 1v9H2z" fill="#d51a26" stroke="#4a0609" /><path d="M6 3H4v2h2v2H4m5-4 1 4 1-3 1 3 1-4" stroke="#fff" /><path d="M2 9h14v7H2z" fill="#000" /><path d="M3 10.500h2v1.500H3.500V14H5M6.500 10.500h2v3.500h-2zM10 10.500h2v1.500h-1.500V14H12M13 10.500h2V14h-2m0-2h2" stroke="#fff" strokeWidth=".900" /></Svg>
        <h2 className="pl-[6px]">另存为</h2>
        <button aria-label="关闭" className="ml-auto"><Svg w={12} vb="0 0 12 12"><path d="m1 1 10 10m0-10L1 11" stroke="#fff" /></Svg></button>
      </div>
      <div className="flex h-[57px] shrink-0 items-center pr-3 pb-[2px] pl-[14px]">
        <button aria-label="后退" className="w-[35px]"><Svg w={14} vb="0 0 14 14"><path d="M14 7H1.500M7 1.500 1.500 7 7 12.500" stroke="#9a9a9a" strokeWidth="1.200" /></Svg></button>
        <button aria-label="前进" className="w-[32px]"><Svg w={14} vb="0 0 14 14"><path d="M0 7h12.500M7 1.500 12.500 7 7 12.500" stroke="#9a9a9a" strokeWidth="1.200" /></Svg></button>
        <button aria-label="最近位置" className="w-[27px]"><Chevron d="down" color="#8a8a8a" size={9} /></button>
        <button aria-label="上移" className="w-[29px]"><Svg w={14} vb="0 0 14 14"><path d="M7 14V1.500M1.500 7 7 1.500 12.500 7" stroke="#555" strokeWidth="1.300" /></Svg></button>
        <div className="flex h-[35px] grow items-center border border-[#d9d9d9] pl-2">
          <Svg w={16} h={13} vb="0 0 16 13"><path d="M0 1q0-1 1-1h5l2 2h7q1 0 1 1v9q0 1-1 1H1q-1 0-1-1z" fill="#f2a80c" /><path d="M0 4h16v8q0 1-1 1H1q-1 0-1-1z" fill="#ffd05a" /></Svg>
          {crumbs.map((c, i) => (
            <span key={c} className={`flex items-center ${i ? 'pl-[9px]' : 'pl-[6px]'}`}><Chevron color="#333" /><button className="pl-[9px] whitespace-nowrap text-black">{c}</button></span>
          ))}
          <button aria-label="展开地址" className="mr-[28px] ml-auto"><Chevron d="down" color="#666" size={9} /></button>
          <button aria-label="刷新" className="mr-3"><Svg w={14} vb="0 0 14 14"><path d="M12 4.500A6 6 0 1 0 13 8M12.500 0v5h-5" stroke="#777" strokeWidth="1.200" /></Svg></button>
        </div>
        <div className="ml-3 flex h-[35px] w-[202px] items-center border border-[#d9d9d9] pr-[14px] pl-[9px]">
          <input aria-label="搜索" placeholder="在 自定义零件门板 中搜索" className="w-[140px] grow outline-none placeholder:text-[#6b6b6b]" />
          <Svg w={12} vb="0 0 12 12"><circle cx="7.500" cy="4.500" r="3.500" stroke="#666" strokeWidth="1.500" /><path d="M5 7 .700 11.300" stroke="#666" strokeWidth="1.700" /></Svg>
        </div>
      </div>
      <div className="flex h-8 shrink-0 items-center border-b border-[#e5e8eb] bg-[#f4f6f8] pr-[15px] pl-[18px] text-[#1f3a66]">
        <button className="flex items-center gap-[5px]">组织 <Caret color="#1f3a66" /></button>
        <button className="ml-[31px]">新建文件夹</button>
        <button aria-label="视图" className="ml-auto flex items-center gap-[11px]"><Svg w={12} vb="0 0 12 12"><path d="M0 1.500h12M0 4.500h12M0 7.500h12M0 10.500h12" stroke="#222" /></Svg><Caret color="#1f3a66" /></button>
        <button aria-label="帮助" className="ml-[30px] flex size-4 items-center justify-center rounded-full bg-[#0e84d9] text-[11px] font-bold text-white">?</button>
      </div>
      <div className="flex min-h-0 grow overflow-hidden">
        <Sidebar />
        <div className="min-w-0 grow">
          <table className="w-full table-fixed border-collapse text-left text-[#4c5f7a]">
            <thead>
              <tr className="h-[27px]">
                <th className="relative w-[273px] border-r border-[#e2e2e2] pl-[32px] font-normal">名称<span className="absolute -top-[1px] left-[145px]"><Chevron d="up" color="#555" size={9} /></span></th>
                <th className="w-36 border-r border-[#e2e2e2] pl-[6px] font-normal">修改日期</th>
                <th className="w-[120px] border-r border-[#e2e2e2] pl-[6px] font-normal">类型</th>
                <th className="w-20 border-r border-[#e2e2e2] pl-[6px] font-normal">大小</th>
                <th aria-label="空" />
              </tr>
            </thead>
            <tbody><tr className="h-[47px]"><td colSpan={5} className="text-center text-[#6d6d6d]">没有与搜索条件匹配的项。</td></tr></tbody>
          </table>
        </div>
      </div>
      <form className="h-[134px] shrink-0 bg-[#f9f9f9] pt-[11px] pr-[6px] text-black" onSubmit={(e) => e.preventDefault()}>
        <div className="flex items-center">
          <label htmlFor="fname" className="w-[125px] shrink-0 pr-[5px] text-right">文件名(N):</label>
          <div className="flex h-[25px] grow items-center border border-[#0078d4] bg-white pr-[4px] pl-[3px]">
            <input id="fname" ref={nameRef} defaultValue="单门板 折弯带腰孔[按数量].pdf" className="h-[17px] grow text-[12px] leading-[17px] outline-none selection:bg-[#0078d7] selection:text-white" />
            <Chevron d="down" color="#555" size={9} />
          </div>
        </div>
        <div className="mt-[2px] flex items-center">
          <label htmlFor="ftype" className="w-[125px] shrink-0 pr-[5px] text-right">保存类型(T):</label>
          <div className="flex h-[25px] grow items-center rounded-[2px] border border-[#c8c8c8] bg-[#fdfdfd] pr-[4px] pl-[3px]">
            <select id="ftype" className="grow appearance-none text-[12px] outline-none"><option>Adobe Portable Document Format (*.pdf)</option></select>
            <Chevron d="down" color="#555" size={9} />
          </div>
        </div>
        <div className="flex h-[29px] items-center">
          <span className="w-[125px] shrink-0 pr-[2px] text-right text-[#6d6d6d]">说明:</span>
          <a href="#description" className="pl-2 text-[#0a63c9]">Add a description</a>
        </div>
        <div className="flex items-start">
          <div className="relative ml-[102px] flex h-[43px] w-[182px] items-center pl-[23px]">
            <label className="flex items-center gap-[3px] text-[#0a63c9]">
              <input type="checkbox" className="size-[13px] appearance-none rounded-[3px] border border-[#555] bg-white" />
              保存后查阅 PDF(V)
            </label>
            <svg className="pointer-events-none absolute inset-0 overflow-visible drop-shadow-[3px_3px_2px_rgba(0,0,0,0.6)]" width="182" height="43" viewBox="0 0 182 43" fill="none" aria-hidden="true">
              <rect x="3" y="3" width="176" height="37" rx="13" stroke="#fff" strokeWidth="8" strokeDasharray="11 1" strokeDashoffset="2" />
              <rect x="3" y="3" width="176" height="37" rx="13" stroke="#f00808" strokeWidth="5" strokeDasharray="7 5" />
            </svg>
          </div>
          <button type="button" className="mt-[14px] ml-[67px] h-[24px] w-[133px] rounded-[3px] border border-[#cacaca] bg-[#fdfdfd]">选项...</button>
        </div>
      </form>
      <div className="flex h-[52px] shrink-0 items-center gap-[14px] bg-[#f0f0f0] pr-[18px] pl-[13px] text-black">
        <button className="mt-2 flex items-center gap-2"><Chevron d="up" color="#333" size={9} />隐藏文件夹</button>
        <button className="ml-auto h-6 w-[86px] rounded-[3px] border border-[#0078d4] bg-[#fdfdfd]">保存(S)</button>
        <button className="h-6 w-[86px] rounded-[3px] border border-[#cacaca] bg-[#fdfdfd]">取消</button>
      </div>
    </div>
  );
}

function Callout() {
  return (
    <div className="absolute top-[347px] left-[424px] h-[107px] w-[309px]">
      <svg className="absolute top-0 -left-[84px] overflow-visible drop-shadow-[3px_4px_3px_rgba(0,0,0,0.75)]" width="393" height="330" viewBox="0 0 393 330" aria-hidden="true">
        <path d="M96 .500H381Q392.500.500 392.500 12V95q0 12-11.500 12H179L.500 329 145 107H96q-11.500 0-11.500-12V12Q84.500.500 96 .500z" fill="#f0f" stroke="#444" />
      </svg>
      <p className="relative pt-[22px] pl-[21px] text-[29px] leading-8 font-light whitespace-nowrap text-[#2e2e2e]">
        <span className="block pl-1">在合并前，需要手动</span>
        <span className="block">把这个选项<span className="text-[#1100ff]">取消打钩</span></span>
      </p>
    </div>
  );
}

export default function App() {
  return (
    <div className="flex h-screen flex-col overflow-hidden bg-[#f7f7f7] font-['Noto_Sans','Noto_Sans_CJK_SC',sans-serif]">
      <TitleBar />
      <div className="flex h-11 shrink-0 items-center border-b border-[#b9b9b9] bg-[#f7f7f7]">
        <button aria-label="图层列表" className="flex h-9 w-[19px] items-center justify-center border border-l-0 border-[#c8c8c8] bg-white"><Chevron d="down" color="#555" size={9} /></button>
        <div className="flex h-full w-[47px] items-center border-r border-[#858585] pl-[5px]">
          <Svg w={27} h={21} vb="0 0 27 21"><path d="m1 13 8 7 17-7-8-6zM1 9l8 7 17-6" fill="#fff" stroke="#444" /><path d="m1 3 8-1 3-1h5l9 6L9 13 1 5z" fill="#74bde0" stroke="#1f5f80" /></Svg>
        </div>
      </div>
      <Ribbon />
      <TabStrip />
      <div className="flex min-h-0 grow border-b border-[#858585]">
        <FeaturePanel />
        <main className="relative flex min-w-0 grow bg-[radial-gradient(ellipse_at_0%_10%,#ffffff_0%,#f4f6fb_10%,#e1e7f3_35%,#d0d5e2_60%,#c3c7d5_100%)]">
          <div className="absolute top-[126px] left-[35px] h-[512px] w-[60px] border border-black bg-[#d8d5c8] pt-[4px] pl-[4px]"><div className="h-[497px] border border-[#d88080]" /></div>
          <button aria-label="调整面板" className="absolute top-[393px] -left-px flex h-[39px] w-[9px] items-center justify-center border border-l-0 border-[#858585] bg-[#f7f7f7]"><span className="size-[6px] rounded-full border border-[#888] bg-[#ccc]" /></button>
          <div className="ml-auto flex w-4 shrink-0 flex-col items-center justify-between border-l border-white bg-[#efefef] py-[6px]">
            <Svg w={8} h={6} vb="0 0 8 6"><path d="m4 0 4 6H0z" fill="#a3a3a3" /></Svg>
            <Svg w={8} h={6} vb="0 0 8 6"><path d="m4 6 4-6H0z" fill="#a3a3a3" /></Svg>
          </div>
          <button aria-label="关闭视图" className="absolute top-[14px] right-[31px]"><Svg w={17} vb="0 0 17 17"><path d="m1 1 15 15m0-15L1 16" stroke="#8a8a8a" strokeWidth="1.800" /></Svg></button>
          <div className="absolute top-[63px] right-0 w-[39px] border border-r-0 border-[#858585]">
            {taskTabs.map(([n, i], k) => (
              <button key={n} aria-label={n} className={`flex w-full items-center justify-center border-[#858585] ${k === 0 ? 'h-[34px] bg-[#f7f7f7]' : 'h-9 border-t bg-[#d2d2d2]'}`}>{i}</button>
            ))}
          </div>
          <SaveDialog />
          <Callout />
        </main>
        <TaskPane />
      </div>
    </div>
  );
}
